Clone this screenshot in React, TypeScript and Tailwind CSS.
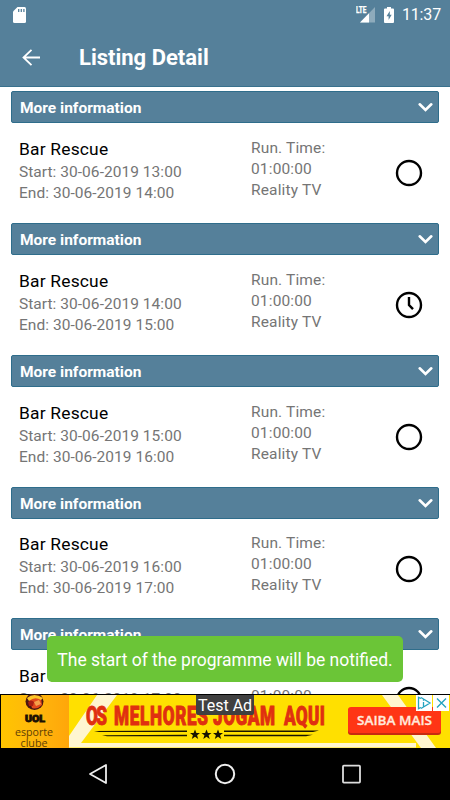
import { useState } from "react";

type Listing = {
    title: string;
    start: string;
    end: string;
    notify: boolean;
};

const INITIAL_LISTINGS: Listing[] = [
    { title: "Bar Rescue", start: "30-06-2019 13:00", end: "30-06-2019 14:00", notify: false },
    { title: "Bar Rescue", start: "30-06-2019 14:00", end: "30-06-2019 15:00", notify: true },
    { title: "Bar Rescue", start: "30-06-2019 15:00", end: "30-06-2019 16:00", notify: false },
    { title: "Bar Rescue", start: "30-06-2019 16:00", end: "30-06-2019 17:00", notify: false },
    { title: "Bar Rescue", start: "30-06-2019 17:00", end: "30-06-2019 18:00", notify: false },
];

// headline words of the ad: [text, x, width]
const HEADLINE: [string, number, number][] = [
    ["OS", 86, 21],
    ["MELHORES", 114, 94],
    ["JOGAM", 213, 62],
    ["AQUI", 284, 41],
];

function StatusBar() {
    return (
        <div className="flex h-[29px] items-center justify-between pl-[13px] pr-[9px]">
            <svg width="13" height="16" viewBox="0 0 13 16">
                <path d="M4.5 0H11.5Q13 0 13 1.5V14.5Q13 16 11.5 16H1.5Q0 16 0 14.5V4.5Z" fill="#fff" />
                <path d="M5.7 2V5M8.3 2V5M10.9 2V5" stroke="#55809a" strokeWidth="1.3" />
            </svg>
            <div className="flex items-center">
                <svg width="19" height="17" viewBox="0 0 19 17">
                    <path d="M19 1V16.5H4Z" fill="#8eabbc" />
                    <path d="M13 7.2V16.5H4Z" fill="#fff" />
                    <text x="0" y="7.3" fontSize="9" fontWeight="700" textLength="10.5" lengthAdjust="spacingAndGlyphs" fill="#fff" stroke="#fff" strokeWidth="0.3" fontFamily="Roboto, sans-serif">LTE</text>
                </svg>
                <svg className="ml-[9px]" width="10" height="16" viewBox="0 0 10 16">
                    <path d="M3 0H7V1.5H9Q10 1.5 10 2.5V15Q10 16 9 16H1Q0 16 0 15V2.5Q0 1.5 1 1.5H3Z" fill="#fff" />
                    <path d="M5.8 4L2.5 9.2H4.6V13L7.7 7.8H5.8Z" fill="#55809a" />
                </svg>
                <span className="ml-2 text-[16px] leading-4 tracking-[-0.15px] text-white">11:37</span>
            </div>
        </div>
    );
}

function Header() {
    return (
        <header className="h-[87px] border-b border-[#39718d] bg-[#55809a]">
            <StatusBar />
            <div className="flex h-[57px] items-center pl-[22px]">
                <button type="button" aria-label="Back">
                    <svg width="19" height="18" viewBox="0 0 19 18" fill="none" stroke="#fff" strokeWidth="1.8">
                        <path d="M18 8.5H1.7M9.5 0.8L1.5 8.5L9.5 16.2" />
                    </svg>
                </button>
                <h1 className="ml-[38px] text-[22px] font-bold leading-7 text-white">Listing Detail</h1>
            </div>
        </header>
    );
}

function NotifyIcon({ active }: { active: boolean }) {
    return (
        <svg width="28" height="28" viewBox="0 0 28 28" fill="none" stroke="#000" strokeWidth="2.4">
            <circle cx="14" cy="14" r="12" />
            {active && <path d="M14 6V14L18 18.2" />}
        </svg>
    );
}

function ListingItem({ item, onToggle }: { item: Listing; onToggle: () => void }) {
    return (
        <section className="h-[131.75px]">
            <div className="flex h-8 items-center justify-between rounded-[2px] border border-[#2f6d8b] bg-[#55809a] pl-2 pr-[5px]">
                <span className="pt-0.5 text-[15.5px] font-bold leading-5 text-white">More information</span>
                <svg width="15" height="10" viewBox="0 0 15 10" fill="none" stroke="#fff" strokeWidth="2.6" strokeLinecap="round">
                    <path d="M1.7 2.3L7.5 8L13.3 2.3" />
                </svg>
            </div>
            <div className="flex pl-2 pr-4 pt-[14.8px] text-[15.5px] leading-[21px] text-[#757575]">
                <div className="w-[232px]">
                    <p className="text-[17.4px] leading-[22px] tracking-[0.2px] text-black">{item.title}</p>
                    <p className="pt-[2px] tracking-[0.04px]">Start: {item.start}</p>
                    <p className="tracking-[0.04px]">End: {item.end}</p>
                </div>
                <div className="flex-1 tracking-[0.15px]">
                    <p>Run. Time:</p>
                    <p>01:00:00</p>
                    <p>Reality TV</p>
                </div>
                <button type="button" aria-label="Notify" onClick={onToggle} className="mt-[21.4px] h-7">
                    <NotifyIcon active={item.notify} />
                </button>
            </div>
        </section>
    );
}

function AdBanner() {
    return (
        <div className="relative h-[54px] shrink-0 bg-black">
            <svg className="block" width="450" height="54" viewBox="0 0 450 54">
                <defs>
                    <linearGradient id="clube" x1="0" x2="1">
                        <stop offset="0" stopColor="#ffc400" />
                        <stop offset="0.5" stopColor="#ffb70c" />
                        <stop offset="1" stopColor="#ffa60a" />
                    </linearGradient>
                </defs>
                <rect x="1" y="1" width="449" height="53" fill="#ffe000" />
                <path d="M69 42L97 1H117L81 49H416V53.5H69Z" fill="#fff6d0" />
                <path d="M382 1H398L436 54H421Z" fill="#fff6d0" />
                <rect x="1" y="1" width="68" height="53" fill="url(#clube)" />

                {/* mascot */}
                <ellipse cx="34.5" cy="7.5" rx="9" ry="8.5" fill="#4a1710" />
                <path d="M29 4Q34 0 41 4L42 11Q37 16 32 14Z" fill="#e34a1d" />
                <path d="M27 4Q34 -2 43 4L41 6Q35 2 29 7Z" fill="#ffc526" />
                <path d="M28 8Q31 5 34 8L33 12H29Z" fill="#a81f12" />
                <path d="M34 8L39 6L41 10L36 12Z" fill="#f5a04a" />
                <g fontFamily="Roboto, sans-serif">
                    <text x="25" y="28" fontSize="9" fontWeight="900" textLength="20" lengthAdjust="spacingAndGlyphs" fill="#1a1002" stroke="#1a1002" strokeWidth="0.8">UOL</text>
                    <text x="15" y="42" fontSize="11" textLength="38" lengthAdjust="spacingAndGlyphs" fill="#5d3d05" fontFamily="Open Sans, sans-serif">esporte</text>
                    <text x="20.5" y="53" fontSize="11" textLength="27" lengthAdjust="spacingAndGlyphs" fill="#5d3d05" fontFamily="Open Sans, sans-serif">clube</text>
                    {HEADLINE.map(([word, x, width]) => (
                        <g key={word} transform={`translate(${x} 30.5) scale(0.66 1)`}>
                            <text fontSize="26" fontWeight="900" textLength={width / 0.66} fill="#e03010" stroke="#e03010" strokeWidth="0.9">{word}</text>
                        </g>
                    ))}
                </g>

                <path d="M94 37L187 36.5V38H99ZM102 41.3L187 40.8V42.3H107ZM224 36.5H319L313 38H224ZM224 40.8H313L306 42.3H224Z" fill="#191400" />
                {[195, 206.5, 218].map((x) => (
                    <path
                        key={x}
                        transform={`translate(${x} 40.5)`}
                        d="M0 -5L1.4 -1.6L5 -1.5L2.1 0.8L3.2 4.5L0 2.3L-3.2 4.5L-2.1 0.8L-5 -1.5L-1.4 -1.6Z"
                        fill="#191400"
                    />
                ))}

                <rect x="348" y="14" width="93" height="27" rx="3" fill="#c72a10" />
                <rect x="348" y="13" width="93" height="26" rx="3" fill="#ff3515" />
                <text x="357" y="31" fontSize="13" fontWeight="600" textLength="75" lengthAdjust="spacingAndGlyphs" fill="#ffe9dc" stroke="#ffe9dc" strokeWidth="0.3" fontFamily="Open Sans, sans-serif">SAIBA MAIS</text>

                <rect x="416" y="1" width="16" height="16" fill="#fff" />
                <rect x="433" y="1" width="16" height="16" fill="#fff" />
                <path d="M421 4.5L418.5 3.3V14.7L421 13.5M421 3.5L430 9L421 14.5M423.5 8V12.5M423.5 5.5V6.7" fill="none" stroke="#25a3c0" strokeWidth="1.3" />
                <path d="M437 4.5L446 13.5M446 4.5L437 13.5" stroke="#25a3c0" strokeWidth="1.4" />
            </svg>
            <span className="absolute left-[196px] top-px h-5 w-[58px] rounded-b-[2px] bg-[#404040] text-center text-[16px] leading-[21px] text-white">Test Ad</span>
        </div>
    );
}

function NavBar() {
    return (
        <nav className="flex h-[52px] shrink-0 items-center justify-between bg-black pl-[88px] pr-[89px]">
            <svg width="20" height="22" viewBox="0 0 20 22" fill="none" stroke="#eee" strokeWidth="1.8" strokeLinejoin="round">
                <path d="M18 2V20L2 11Z" />
            </svg>
            <svg width="22" height="22" viewBox="0 0 22 22" fill="none" stroke="#eee" strokeWidth="2">
                <circle cx="11" cy="11" r="9.2" />
            </svg>
            <svg width="20" height="20" viewBox="0 0 20 20" fill="none" stroke="#ddd" strokeWidth="1.8">
                <rect x="2" y="1.6" width="17" height="17" rx="0.8" />
            </svg>
        </nav>
    );
}

export default function App() {
    const [listings, setListings] = useState(INITIAL_LISTINGS);

    const toggle = (index: number) => {
        setListings((prev) => prev.map((l, i) => (i === index ? { ...l, notify: !l.notify } : l)));
    };

    return (
        <div className="flex h-[800px] w-[450px] flex-col overflow-hidden bg-white font-['Roboto',sans-serif]">
            <Header />
            <main className="relative min-h-0 flex-1 overflow-hidden px-[11px] pt-[4.3px]">
                {listings.map((item, i) => (
                    <ListingItem key={item.start} item={item} onToggle={() => toggle(i)} />
                ))}
                <div className="absolute bottom-[12px] left-[47px] flex h-[46px] w-[356px] items-center justify-center rounded-[5px] bg-[#6bc537] pt-0.5 text-[17.5px] text-white">
                    The start of the programme will be notified.
                </div>
            </main>
            <AdBanner />
            <NavBar />
        </div>
    );
}
